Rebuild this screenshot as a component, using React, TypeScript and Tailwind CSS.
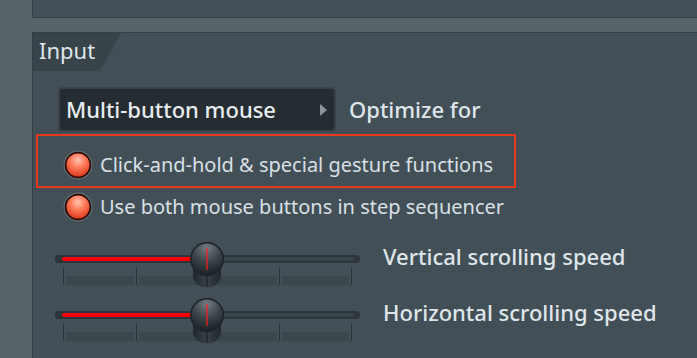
import React from 'react'

const font = { fontFamily: '"Noto Sans", "Open Sans", sans-serif' }

function Radio() {
  return (
    <svg width="30" height="30" viewBox="0 0 30 30" className="shrink-0">
      <defs>
        <radialGradient id="rg" cx="50%" cy="30%" r="70%">
          <stop offset="0%" stopColor="#ffc4b0" />
          <stop offset="45%" stopColor="#ff7d5c" />
          <stop offset="100%" stopColor="#dc3a1c" />
        </radialGradient>
      </defs>
      <circle cx="15" cy="15" r="14.5" fill="#5f696f" />
      <circle cx="15" cy="15" r="13.2" fill="#2a0a05" />
      <circle cx="15" cy="15" r="11.5" fill="url(#rg)" />
    </svg>
  )
}

function Knob() {
  return (
    <svg width="36" height="48" viewBox="0 0 36 48">
      <defs>
        <linearGradient id="kb" x1="0" y1="0" x2="1" y2="0">
          <stop offset="0%" stopColor="#1f262a" />
          <stop offset="50%" stopColor="#384248" />
          <stop offset="100%" stopColor="#1f262a" />
        </linearGradient>
        <radialGradient id="kt" cx="50%" cy="15%" r="85%">
          <stop offset="0%" stopColor="#737d82" />
          <stop offset="50%" stopColor="#3d464b" />
          <stop offset="100%" stopColor="#1c2226" />
        </radialGradient>
      </defs>
      <rect x="4" y="16" width="28" height="30" rx="12" fill="url(#kb)" />
      <line x1="18" y1="34" x2="18" y2="46" stroke="#161b1e" strokeWidth="1" />
      <circle cx="18" cy="18" r="17" fill="#1c2226" />
      <circle cx="18" cy="18" r="15.5" fill="url(#kt)" />
      <line x1="18" y1="7" x2="18" y2="29" stroke="#ff1a1a" strokeWidth="1.2" />
    </svg>
  )
}

function Slider() {
  const ticks = [8, 81, 152, 224, 296]
  return (
    <div className="relative w-[305px] h-[46px] shrink-0">
      <div className="absolute left-0 top-[14px] w-[305px] h-[8px] rounded-full bg-[#2c353b]">
        <div className="absolute left-[7px] top-[2px] w-[130px] h-[4px] rounded-full bg-[#ff0000]" />
        <div className="absolute left-[150px] right-[5px] top-[2px] h-[4px] rounded-full bg-[#38434a]" />
      </div>
      {ticks.map(t => (
        <div key={t} className="absolute top-[26px] h-[18px] w-px bg-[#2a3338]" style={{ left: t }} />
      ))}
      {ticks.slice(0, -1).map((t, i) => (
        <div
          key={'b' + t}
          className="absolute top-[35px] h-[9px] bg-[#3c464d]"
          style={{ left: t + 3, width: ticks[i + 1] - t - 5 }}
        />
      ))}
      <div className="absolute left-[134px] top-0">
        <Knob />
      </div>
    </div>
  )
}

export default function App() {
  return (
    <div className="w-[697px] h-[358px] bg-[#58636a] overflow-hidden flex" style={font}>
      <div className="w-[32px] shrink-0" />
      <div className="flex-1 flex flex-col">
        <div className="h-[18px] shrink-0 bg-[#434f57] border-b border-l border-[#343e44]" />
        <div className="h-[14px] shrink-0" />
        <div className="flex-1 bg-[#434f57] border-t border-l border-[#343e44] flex flex-col">
          <div className="relative w-[90px] h-[38px]">
            <svg width="90" height="38" viewBox="0 0 90 38" className="absolute left-0 top-0">
              <path d="M0 0 H88 L70 33 Q67 38 62 38 H0 Z" fill="#39434a" />
            </svg>
            <span className="relative block pl-[6px] pt-[2px] text-[22px] leading-[30px] text-[#dfe6ea]">Input</span>
          </div>

          <div className="flex items-center mt-[16px] ml-[25px]">
            <div className="w-[278px] h-[45px] rounded-[4px] border-2 border-[#384248] bg-[#262d32] flex items-center justify-between pl-[6px] pr-[7px]">
              <span className="text-[22px] font-medium text-[#e6ecef]">Multi-button mouse</span>
              <span className="w-0 h-0 border-y-[6px] border-y-transparent border-l-[7px] border-l-[#8a9499]" />
            </div>
            <span className="ml-[13px] text-[22px] font-medium text-[#dfe6ea]">Optimize for</span>
          </div>

          <div className="ml-[3px] mt-[2px] w-[480px] border-2 border-[#e8391f] pt-[14px] pb-[6px] pl-[25px]">
            <div className="flex items-center h-[30px]">
              <Radio />
              <span className="ml-[7px] text-[20px] text-[#d8e0e5]">Click-and-hold &amp; special gesture functions</span>
            </div>
          </div>

          <div className="flex items-center h-[30px] ml-[30px] mt-[4px]">
            <Radio />
            <span className="ml-[7px] text-[20px] text-[#d8e0e5]">Use both mouse buttons in step sequencer</span>
          </div>

          <div className="flex ml-[22px] mt-[19px]">
            <Slider />
            <span className="ml-[23px] text-[22px] font-medium leading-[30px] text-[#dfe6ea]">Vertical scrolling speed</span>
          </div>
          <div className="flex ml-[22px] mt-[10px]">
            <Slider />
            <span className="ml-[23px] text-[22px] font-medium leading-[30px] text-[#dfe6ea]">Horizontal scrolling speed</span>
          </div>
        </div>
      </div>
    </div>
  )
}
